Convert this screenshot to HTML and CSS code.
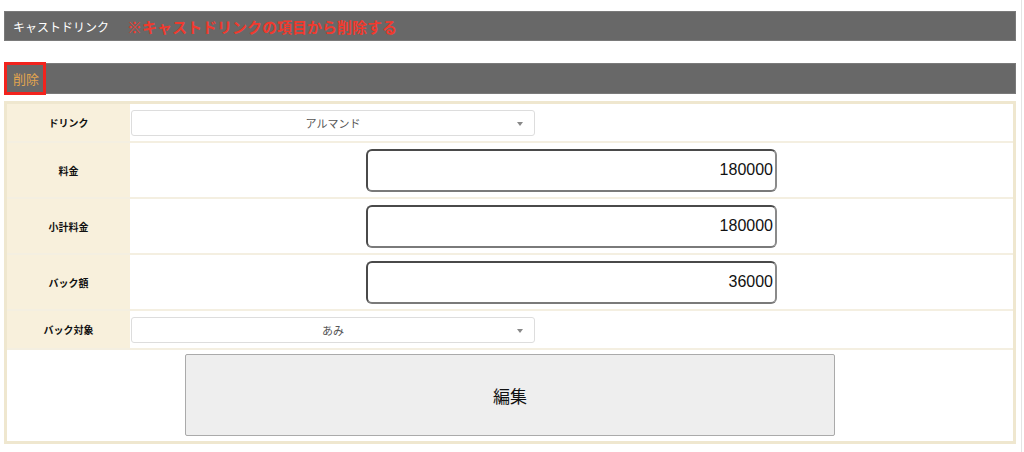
FILE: index.html
```html
<!DOCTYPE html>
<html lang="ja">
<head>
    <meta charset="utf-8">
    <title>キャストドリンク</title>
    <link rel="stylesheet" href="styles.css">
</head>
<body>
    <div class="page">
        <!-- 見出し -->
        <div class="bar bar-title">
            <span class="bar-label">キャストドリンク</span>
            <span class="note">※キャストドリンクの項目から削除する</span>
        </div>
        <div class="bar bar-delete">
            <span class="delete-box">削除</span>
        </div>

        <!-- 編集フォーム -->
        <div class="form">
            <div class="row row-short">
                <div class="label">ドリンク</div>
                <div class="field">
                    <div class="select">アルマンド<span class="caret"></span></div>
                </div>
            </div>
            <div class="row row-tall">
                <div class="label">料金</div>
                <div class="field center">
                    <div class="input">180000</div>
                </div>
            </div>
            <div class="row row-tall">
                <div class="label">小計料金</div>
                <div class="field center">
                    <div class="input">180000</div>
                </div>
            </div>
            <div class="row row-tall">
                <div class="label">バック額</div>
                <div class="field center">
                    <div class="input">36000</div>
                </div>
            </div>
            <div class="row row-short">
                <div class="label">バック対象</div>
                <div class="field">
                    <div class="select">あみ<span class="caret"></span></div>
                </div>
            </div>
            <div class="row-button">
                <button class="edit">編集</button>
            </div>
        </div>
    </div>
</body>
</html>
```

FILE: styles.css
```css
/* ページ全体 */
body {
    margin: 0;
    background: #fff;
    font-family: "Noto Sans CJK JP", "Liberation Sans", sans-serif;
    color: #222;
}
.page {
    width: 1012px;
    padding: 11px 5px 0 4px;
    border-right: 1px solid #e4e4e4;
    min-height: 441px;
}

/* 見出しバー */
.bar {
    background: #686868;
    border: 1px solid #7a7a7a;
    box-sizing: border-box;
    display: flex;
    align-items: center;
}
.bar-title {
    height: 30px;
    padding-left: 8px;
}
.bar-label {
    color: #fff;
    font-size: 12px;
}
.note {
    color: #f03a2e;
    font-size: 15px;
    font-weight: bold;
    margin-left: 18px;
}
.bar-delete {
    height: 31px;
    margin-top: 22px;
    border-left: none;
}
.delete-box {
    border: 3px solid #f2231d;
    color: #e3a54e;
    font-size: 13px;
    height: 33px;
    box-sizing: border-box;
    padding: 0 4px 0 6px;
    display: flex;
    align-items: center;
}

/* フォーム */
.form {
    margin-top: 7px;
    border: 3px solid #efe7cf;
    background: #fff;
}
.row {
    display: grid;
    grid-template-columns: 123px 1fr;
    border-bottom: 2px solid #f4efe1;
}
.row-short { height: 37px; }
.row-tall { height: 54px; }
.label {
    background: #f8f0dc;
    font-size: 10px;
    font-weight: bold;
    display: flex;
    align-items: center;
    justify-content: center;
    color: #111;
}
.field {
    display: flex;
    align-items: center;
    padding-left: 1px;
}
.field.center {
    justify-content: center;
    padding-left: 0;
}
.select {
    width: 404px;
    height: 26px;
    box-sizing: border-box;
    border: 1px solid #ddd;
    border-radius: 3px;
    position: relative;
    display: flex;
    align-items: center;
    justify-content: center;
    font-size: 11px;
    color: #555;
}
.caret {
    position: absolute;
    right: 11px;
    top: 11px;
    border-left: 3px solid transparent;
    border-right: 3px solid transparent;
    border-top: 4px solid #888;
}
.input {
    width: 411px;
    height: 43px;
    box-sizing: border-box;
    border: 2px solid #4a4a4a;
    border-right-color: #8a8a8a;
    border-bottom-color: #7a7a7a;
    border-radius: 6px;
    display: flex;
    align-items: center;
    justify-content: flex-end;
    padding-right: 2px;
    font-family: "Liberation Sans", Arial, sans-serif;
    font-size: 16px;
    color: #111;
}
.row-button {
    height: 91px;
    display: flex;
    justify-content: center;
    align-items: center;
}
.edit {
    width: 650px;
    height: 82px;
    margin-top: -1px;
    background: #eee;
    border: 1px solid #aaa;
    border-radius: 2px;
    font-family: "Noto Sans CJK JP", sans-serif;
    font-size: 17px;
    color: #111;
}
```
